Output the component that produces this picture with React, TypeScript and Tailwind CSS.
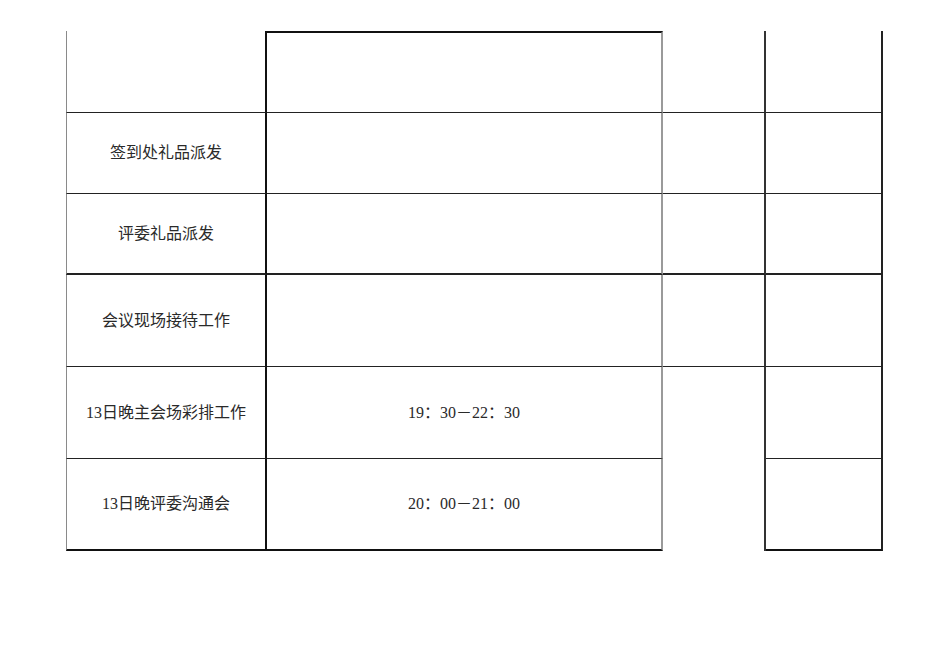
import React from 'react';

type Cell = {
  text?: string;
  className: string;
};

// each cell draws its own right / bottom edges; the first column adds the left edge
const rows: Cell[][] = [
  [
    { className: 'h-[82px] border-l border-l-[#8a8a8a] border-r-2 border-r-[#111] border-b border-b-[#222]' },
    { className: 'h-[82px] border-t-2 border-t-[#111] border-r-2 border-r-[#9a9a9a] border-b border-b-[#222]' },
    { className: 'h-[82px] border-r-2 border-r-[#333] border-b border-b-[#222]' },
    { className: 'h-[82px] border-r-2 border-r-[#222] border-b border-b-[#222]' },
  ],
  [
    { text: '签到处礼品派发', className: 'h-[81px] border-l border-l-[#8a8a8a] border-r-2 border-r-[#111] border-b border-b-[#222]' },
    { className: 'h-[81px] border-r-2 border-r-[#9a9a9a] border-b border-b-[#222]' },
    { className: 'h-[81px] border-r-2 border-r-[#333] border-b border-b-[#222]' },
    { className: 'h-[81px] border-r-2 border-r-[#222] border-b border-b-[#222]' },
  ],
  [
    { text: '评委礼品派发', className: 'h-[81px] border-l border-l-[#8a8a8a] border-r-2 border-r-[#111] border-b-2 border-b-[#222]' },
    { className: 'h-[81px] border-r-2 border-r-[#9a9a9a] border-b-2 border-b-[#222]' },
    { className: 'h-[81px] border-r-2 border-r-[#333] border-b-2 border-b-[#222]' },
    { className: 'h-[81px] border-r-2 border-r-[#222] border-b-2 border-b-[#222]' },
  ],
];

const Label = ({ children }: { children?: React.ReactNode }) => (
  <span className="text-[16px] leading-none text-[#2a2a2a]">{children}</span>
);

export default function App() {
  return (
    <div
      className="w-[950px] h-[672px] bg-white pt-[31px] pl-[66px]"
      style={{ fontFamily: '"Liberation Serif", "Noto Sans CJK SC", serif' }}
    >
      <div className="grid grid-cols-[201px_396px_103px_117px]">
        {rows.map((row, r) =>
          row.map((cell, c) => (
            <div key={`${r}-${c}`} className={`flex items-center justify-center ${cell.className}`}>
              <Label>{cell.text}</Label>
            </div>
          ))
        )}

        {/* 会议现场接待工作 */}
        <div className="h-[92px] flex items-center justify-center border-l border-l-[#8a8a8a] border-r-2 border-r-[#111] border-b border-b-[#222]">
          <Label>会议现场接待工作</Label>
        </div>
        <div className="h-[92px] border-r-2 border-r-[#9a9a9a] border-b border-b-[#222]" />
        <div className="h-[92px] border-r-2 border-r-[#333] border-b border-b-[#222]" />
        <div className="h-[92px] border-r-2 border-r-[#222] border-b border-b-[#222]" />

        {/* 13日晚主会场彩排工作 */}
        <div className="h-[92px] flex items-center justify-center border-l border-l-[#8a8a8a] border-r-2 border-r-[#111] border-b border-b-[#222]">
          <Label>13日晚主会场彩排工作</Label>
        </div>
        <div className="h-[92px] flex items-center justify-center border-r-2 border-r-[#9a9a9a] border-b border-b-[#222]">
          <Label>19：30－22：30</Label>
        </div>
        <div className="row-span-2 border-r-2 border-r-[#333]" />
        <div className="h-[92px] border-r-2 border-r-[#222] border-b border-b-[#222]" />

        {/* 13日晚评委沟通会 */}
        <div className="h-[92px] flex items-center justify-center border-l border-l-[#8a8a8a] border-r-2 border-r-[#111] border-b-2 border-b-[#111]">
          <Label>13日晚评委沟通会</Label>
        </div>
        <div className="h-[92px] flex items-center justify-center border-r-2 border-r-[#9a9a9a] border-b-2 border-b-[#111]">
          <Label>20：00－21：00</Label>
        </div>
        <div className="h-[92px] border-r-2 border-r-[#222] border-b-2 border-b-[#111]" />
      </div>
    </div>
  );
}
